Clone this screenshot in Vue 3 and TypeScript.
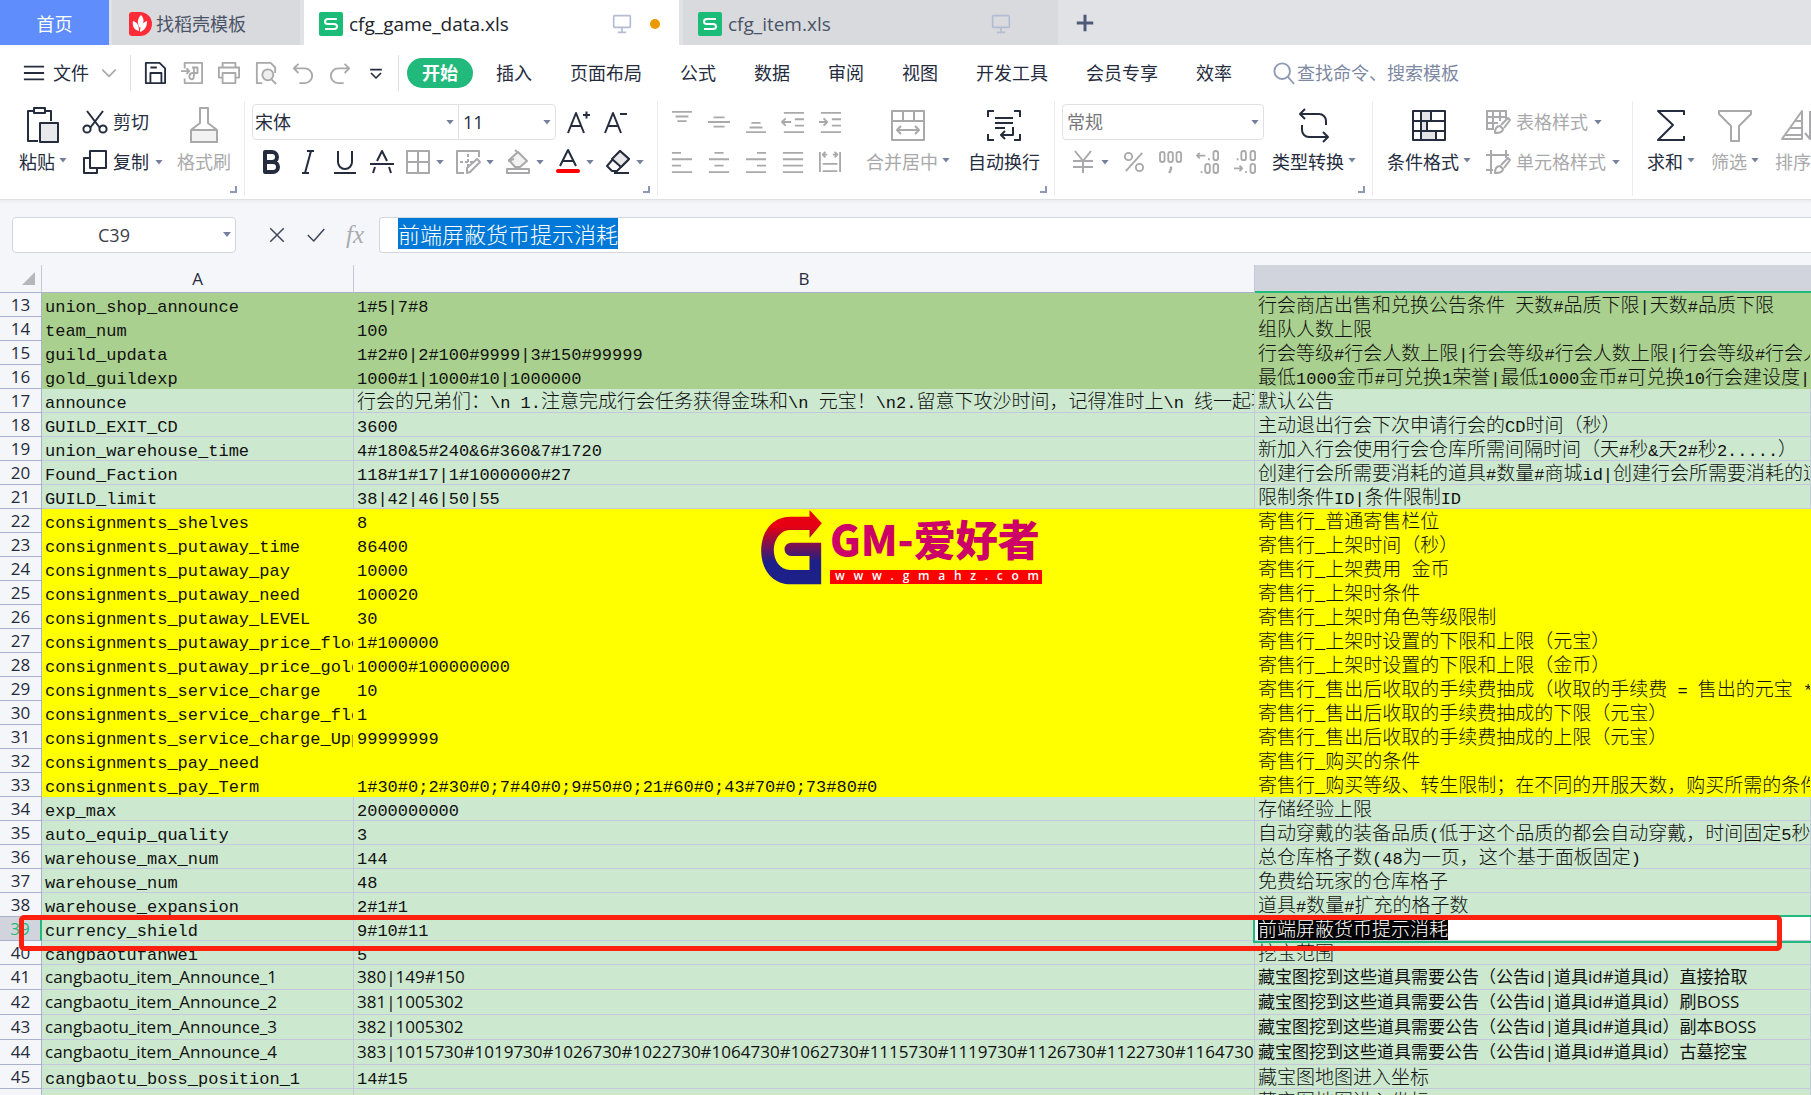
<script setup lang="ts">
import { ref, onMounted, h } from 'vue'
import type { FunctionalComponent } from 'vue'

interface Row {
  n: number
  a: string
  b: string
  c: string
  tone: 'olive' | 'mint' | 'yellow'
  sans?: boolean
}

interface Run {
  text: string
  wide: boolean
}

const glyphs: Record<string, string> = {
  menu: '<path d="M1 5h22M1 12h22M1 19h22"/>',
  chevron: '<path d="M4 8l8 8 8-8"/>',
  save: '<path d="M2 1h15l6 6v16H2zM7 23V12h12v11M7 6h7"/>',
  pdf: '<path d="M4 7V1h19v22H4v-5M0 10h9M6 7l3 3-3 3M12 6h6v6h-5c-5 0-5 7-1 7 3 0 2-8 2-13"/>',
  print: '<path d="M5 6V1h14v5M5 17H1V6h22v11h-4M5 12h14v11H5z"/>',
  preview: '<path d="M8 23H2V1h15l5 5v6"/><circle cx="14" cy="14" r="6" fill="#eee"/><path d="M18 19l5 5"/>',
  undo: '<path d="M7 2L2 7l5 5M2 7h12a8 8 0 0 1 0 16H8"/>',
  redo: '<path d="M17 2l5 5-5 5M22 7H10a8 8 0 0 0 0 16h6"/>',
  more: '<path d="M5 8h14M6 12l6 6 6-6"/>',
  cut: '<path d="M4 1l13 17M20 1L7 18"/><circle cx="4" cy="19" r="3.6"/><circle cx="20" cy="19" r="3.6"/>',
  copy: '<path d="M7 8H1v15h13v-5M7 1h16v17H7z"/>',
  grow: '<path d="M1 23L9 3l8 20M4 16h10M16 5h7M19.500 1.500v7"/>',
  shrink: '<path d="M1 23L9 3l8 20M4 16h10M16 4h7"/>',
  bold: '<path d="M6 2h7a5 5 0 0 1 0 10H6zM6 12h8a5 5 0 0 1 0 10H6z" stroke-width="4"/>',
  italic: '<path d="M11 1h7M6 23h7M15 1L9 23"/>',
  underline: '<path d="M5 1v11a7 7 0 0 0 14 0V1M1 23h22"/>',
  strike: '<path d="M0 14h24M7 11l5-10 5 10M5 17l-2 6M19 17l2 6"/>',
  borders: '<path d="M1 1h22v22H1zM12 1v22M1 12h22"/>',
  drawBorder: '<path d="M23 7V1H1v22h7"/><path d="M4 12h13M12 4v15" stroke-dasharray="3 2"/><path d="M11 23v-5L21 9l3 3-10 10z"/>',
  bucket: '<path d="M3 10L12 2l9 9-7 6H9z" fill="#f2f2f2"/><path d="M9 0l3 3M2 11l6-2M1 19h22v4H1z"/>',
  fontColor: '<path d="M4 16L12 0l8 16M7 11h10"/><path d="M2 21h20" stroke="#f00" stroke-width="4" stroke-linecap="round"/>',
  eraser: '<path d="M14 1l9 8-12 12H6l-5-5z"/><path d="M14 1l9 8-8 8-9-8z" fill="#e8e8ea"/><path d="M8 23h15"/>',
  vTop: '<path d="M1 1h22M5 6h14M7 11h10"/>',
  vMid: '<path d="M6 7h12M0 12h24M6 17h12"/>',
  vBot: '<path d="M7 13h10M5 18h14M1 23h22"/>',
  outdent: '<path d="M2 2h22M14 9h10M14 16h10M2 23h22M0 12h10M4 8l-4 4 4 4"/>',
  indent: '<path d="M2 2h22M14 9h10M14 16h10M2 23h22M0 12h9M5 8l4 4-4 4"/>',
  left: '<path d="M1 2h10M1 9h22M1 16h10M1 23h22"/>',
  center: '<path d="M7 2h10M1 9h22M7 16h10M1 23h22"/>',
  right: '<path d="M13 2h10M1 9h22M13 16h10M1 23h22"/>',
  justify: '<path d="M1 2h22M1 9h22M1 16h22M1 23h22"/>',
  spread: '<path d="M1 1v22M23 1v22M4 4h5M15 4h5M7 1L4 4l3 3M17 1l3 3-3 3M4 14h16M4 22h16"/>',
  currency: '<path d="M4 1l8 10 8-10M2 11h20M2 17h20M12 11v12"/>',
  percent: '<path d="M21 2L3 22"/><circle cx="6" cy="6" r="4"/><circle cx="18" cy="18" r="4"/>',
  thousands: '<rect x="0" y="1" width="5" height="11" rx="2.500"/><rect x="9" y="1" width="5" height="11" rx="2.500"/><rect x="18" y="1" width="5" height="11" rx="2.500"/><path d="M12 17v3l-2 4" stroke-width="2.500"/>',
  moreDec: '<path d="M0 5h9M3 2L0 5l3 3M13 8v2M5 22v2"/><rect x="18" y="0" width="5" height="10" rx="2.500"/><rect x="9" y="14" width="5" height="10" rx="2.500"/><rect x="18" y="14" width="5" height="10" rx="2.500"/>',
  lessDec: '<path d="M0 19h9M6 16l3 3-3 3M4 8v2M13 22v2"/><rect x="8" y="0" width="5" height="10" rx="2.500"/><rect x="18" y="0" width="5" height="10" rx="2.500"/><rect x="18" y="14" width="5" height="10" rx="2.500"/>',
  tableStyle: '<path d="M20 9V1H1v18h7M1 7h19M1 13h11M7 1v18M14 1v10M9 23c0-4 1-7 5-7l3 3c0 3-3 4-8 4zM15 15l7-7 2 2-6 8"/>',
  cellStyle: '<path d="M0 5h23M5 0v24M0 20h7M20 0v8M9 23c0-4 1-7 5-7l3 3c0 3-3 4-8 4zM15 15l7-7 2 2-6 8"/>',
  search: '<circle cx="10" cy="10" r="8.500"/><path d="M16 16l7 8"/>',
  monitor: '<rect x="2" y="2" width="20" height="14" rx="1"/><path d="M12 16v6M7 22h10"/>',
  plus: '<path d="M12 1v22M1 12h22"/>',
  close: '<path d="M3 3l18 18M21 3L3 21"/>',
  check: '<path d="M1 12l8 8L23 4"/>',
  paste: '<path d="M10 4H3v30h10M26 14V4h-7M9 1h11v5H9z"/><path d="M15 16h18v19H15z" fill="#e8e9ec"/>',
  painter: '<path d="M14 1h8v15l9 7v12H5V23l9-7z"/><path d="M5 23h26v12H5z" fill="#f2f2f2"/>',
  merge: '<path d="M2 4h32v29H2zM2 14h32M13 4v10M24 4v10M7 23h22M11 19l-4 4 4 4M25 19l4 4-4 4"/>',
  wrap: '<path d="M8 4H2v6M28 4h6v6M8 33H2v-6M28 33h6v-6M9 11h18M9 16h18M9 21h10M27 20v8H15M19 24l-4 4 4 4"/>',
  convert: '<path d="M9 2L4 7l5 5M4 7h19a7 7 0 0 1 7 7v4M6 18v5a7 7 0 0 0 7 7h19M27 25l5 5-5 5"/>',
  condition: '<path d="M10 4h10v10H10zM10 14h6v10h-6zM10 24h15v9H10z" fill="#e4e4e6"/><path d="M2 4h32v29H2zM2 14h32M2 24h32M10 4v29M20 4v10M16 14v10M25 24v9"/>',
  sum: '<path d="M31 8V4H5l15 14L5 33h26v-4"/>',
  filter: '<path d="M2 4h32v3L22 19v15h-8V19L2 7z"/>',
  sort: '<path d="M21 4v28H1zM14 14h7M9 21h12M4 28h17M29 4v28M24 26l5 6 5-6"/>',
}

const Icon: FunctionalComponent<{ name: string; size?: number; box?: number }> = (p) =>
  h('svg', {
    width: p.size ?? 24,
    height: p.size ?? 24,
    viewBox: `0 0 ${p.box ?? 24} ${p.box ?? 24}`,
    fill: 'none',
    stroke: 'currentColor',
    'stroke-width': 2,
    'stroke-linejoin': 'round',
    overflow: 'visible',
    'aria-hidden': 'true',
    innerHTML: glyphs[p.name],
  })
Icon.props = ['name', 'size', 'box']

const quick = ['save', 'pdf', 'print', 'preview', 'undo', 'redo']
const menus = ['插入', '页面布局', '公式', '数据', '审阅', '视图', '开发工具', '会员专享', '效率']
const plainText = ['bold', 'italic', 'underline', 'strike']
const comboText = [
  { icon: 'borders', dim: true },
  { icon: 'drawBorder', dim: true },
  { icon: 'bucket', dim: true },
  { icon: 'fontColor', dim: false },
  { icon: 'eraser', dim: false },
]
const alignTop = ['vTop', 'vMid', 'vBot', 'outdent', 'indent']
const alignBottom = ['left', 'center', 'right', 'justify', 'spread']
const numberTools = ['percent', 'thousands', 'moreDec', 'lessDec']

const rows: Row[] = [
  { n: 13, a: 'union_shop_announce', b: '1#5|7#8', c: '行会商店出售和兑换公告条件 天数#品质下限|天数#品质下限', tone: 'olive' },
  { n: 14, a: 'team_num', b: '100', c: '组队人数上限', tone: 'olive' },
  { n: 15, a: 'guild_updata', b: '1#2#0|2#100#9999|3#150#99999', c: '行会等级#行会人数上限|行会等级#行会人数上限|行会等级#行会人数上限', tone: 'olive' },
  { n: 16, a: 'gold_guildexp', b: '1000#1|1000#10|1000000', c: '最低1000金币#可兑换1荣誉|最低1000金币#可兑换10行会建设度|每日', tone: 'olive' },
  { n: 17, a: 'announce', b: '行会的兄弟们：\\n 1.注意完成行会任务获得金珠和\\n 元宝！\\n2.留意下攻沙时间，记得准时上\\n 线一起攻沙', c: '默认公告', tone: 'mint' },
  { n: 18, a: 'GUILD_EXIT_CD', b: '3600', c: '主动退出行会下次申请行会的CD时间（秒）', tone: 'mint' },
  { n: 19, a: 'union_warehouse_time', b: '4#180&5#240&6#360&7#1720', c: '新加入行会使用行会仓库所需间隔时间（天#秒&天2#秒2.....）', tone: 'mint' },
  { n: 20, a: 'Found_Faction', b: '118#1#17|1#1000000#27', c: '创建行会所需要消耗的道具#数量#商城id|创建行会所需要消耗的道具', tone: 'mint' },
  { n: 21, a: 'GUILD_limit', b: '38|42|46|50|55', c: '限制条件ID|条件限制ID', tone: 'mint' },
  { n: 22, a: 'consignments_shelves', b: '8', c: '寄售行_普通寄售栏位', tone: 'yellow' },
  { n: 23, a: 'consignments_putaway_time', b: '86400', c: '寄售行_上架时间（秒）', tone: 'yellow' },
  { n: 24, a: 'consignments_putaway_pay', b: '10000', c: '寄售行_上架费用 金币', tone: 'yellow' },
  { n: 25, a: 'consignments_putaway_need', b: '100020', c: '寄售行_上架时条件', tone: 'yellow' },
  { n: 26, a: 'consignments_putaway_LEVEL', b: '30', c: '寄售行_上架时角色等级限制', tone: 'yellow' },
  { n: 27, a: 'consignments_putaway_price_floor', b: '1#100000', c: '寄售行_上架时设置的下限和上限（元宝）', tone: 'yellow' },
  { n: 28, a: 'consignments_putaway_price_gold', b: '10000#100000000', c: '寄售行_上架时设置的下限和上限（金币）', tone: 'yellow' },
  { n: 29, a: 'consignments_service_charge', b: '10', c: '寄售行_售出后收取的手续费抽成（收取的手续费 = 售出的元宝 * 抽成）', tone: 'yellow' },
  { n: 30, a: 'consignments_service_charge_floor', b: '1', c: '寄售行_售出后收取的手续费抽成的下限（元宝）', tone: 'yellow' },
  { n: 31, a: 'consignments_service_charge_Upper', b: '99999999', c: '寄售行_售出后收取的手续费抽成的上限（元宝）', tone: 'yellow' },
  { n: 32, a: 'consignments_pay_need', b: '', c: '寄售行_购买的条件', tone: 'yellow' },
  { n: 33, a: 'consignments_pay_Term', b: '1#30#0;2#30#0;7#40#0;9#50#0;21#60#0;43#70#0;73#80#0', c: '寄售行_购买等级、转生限制；在不同的开服天数，购买所需的条件', tone: 'yellow' },
  { n: 34, a: 'exp_max', b: '2000000000', c: '存储经验上限', tone: 'mint' },
  { n: 35, a: 'auto_equip_quality', b: '3', c: '自动穿戴的装备品质(低于这个品质的都会自动穿戴，时间固定5秒)', tone: 'mint' },
  { n: 36, a: 'warehouse_max_num', b: '144', c: '总仓库格子数(48为一页，这个基于面板固定)', tone: 'mint' },
  { n: 37, a: 'warehouse_num', b: '48', c: '免费给玩家的仓库格子', tone: 'mint' },
  { n: 38, a: 'warehouse_expansion', b: '2#1#1', c: '道具#数量#扩充的格子数', tone: 'mint' },
  { n: 39, a: 'currency_shield', b: '9#10#11', c: '前端屏蔽货币提示消耗', tone: 'mint' },
  { n: 40, a: 'cangbaotufanwei', b: '5', c: '挖宝范围', tone: 'mint' },
  { n: 41, a: 'cangbaotu_item_Announce_1', b: '380|149#150', c: '藏宝图挖到这些道具需要公告（公告id|道具id#道具id）直接拾取', tone: 'mint', sans: true },
  { n: 42, a: 'cangbaotu_item_Announce_2', b: '381|1005302', c: '藏宝图挖到这些道具需要公告（公告id|道具id#道具id）刷BOSS', tone: 'mint', sans: true },
  { n: 43, a: 'cangbaotu_item_Announce_3', b: '382|1005302', c: '藏宝图挖到这些道具需要公告（公告id|道具id#道具id）副本BOSS', tone: 'mint', sans: true },
  { n: 44, a: 'cangbaotu_item_Announce_4', b: '383|1015730#1019730#1026730#1022730#1064730#1062730#1115730#1119730#1126730#1122730#1164730', c: '藏宝图挖到这些道具需要公告（公告id|道具id#道具id）古墓挖宝', tone: 'mint', sans: true },
  { n: 45, a: 'cangbaotu_boss_position_1', b: '14#15', c: '藏宝图地图进入坐标', tone: 'mint' },
  { n: 46, a: '', b: '', c: '藏宝图地图进入坐标', tone: 'mint' },
]

const activeRow = 39

/* Full-width and half-width characters are set in different faces. */
function runs(text: string): Run[] {
  return (text.match(/[\u3000-\u9fff\uff00-\uffef]+|[^\u3000-\u9fff\uff00-\uffef]+/g) ?? []).map((t) => ({
    text: t,
    wide: /[\u3000-\u9fff\uff00-\uffef]/.test(t),
  }))
}

const formula = ref('前端屏蔽货币提示消耗')
const cellName = ref('C39')
const query = ref('')
const formulaBox = ref<HTMLInputElement | null>(null)
const site = 'www.gmahz.com'.split('')

onMounted(() => {
  formulaBox.value?.focus()
  formulaBox.value?.select()
})
</script>

<template>
  <div class="app">
    <nav class="tabs" aria-label="文档">
      <button class="tab home">首页</button>
      <button class="tab store">
        <svg width="23" height="24" viewBox="0 0 23 24" aria-hidden="true">
          <path d="M3 0h8a12 12 0 0 1 0 24H3a3 3 0 0 1-3-3V3a3 3 0 0 1 3-3z" fill="#ff2b36" />
          <path d="M12 3c4 4 3 9-1 13-3-4-3-9 1-13zM4 9c4 1 6 4 6 10-5-1-7-5-6-10zM18 9c0 6-2 9-7 11 0-5 2-9 7-11z" fill="#fff" />
        </svg>
        <span>找稻壳模板</span>
      </button>
      <button class="tab file active">
        <svg width="24" height="24" viewBox="0 0 24 24" aria-hidden="true">
          <rect width="24" height="24" rx="2" fill="#1bbb78" />
          <path d="M18 7H9a3 2.500 0 0 0 0 5h6a3 2.500 0 0 1 0 5H6" fill="none" stroke="#fff" stroke-width="2" />
        </svg>
        <span class="file-name">cfg_game_data.xls</span>
        <Icon class="screen" name="monitor" :size="20" />
        <i class="dirty"></i>
      </button>
      <button class="tab file">
        <svg width="24" height="24" viewBox="0 0 24 24" aria-hidden="true">
          <rect width="24" height="24" rx="2" fill="#1bbb78" />
          <path d="M18 7H9a3 2.500 0 0 0 0 5h6a3 2.500 0 0 1 0 5H6" fill="none" stroke="#fff" stroke-width="2" />
        </svg>
        <span class="file-name">cfg_item.xls</span>
        <Icon class="screen" name="monitor" :size="20" />
        <i class="dirty none"></i>
      </button>
      <button class="add" aria-label="新建"><Icon name="plus" :size="18" stroke-width="4" /></button>
    </nav>

    <div class="menubar">
      <button class="file-menu">
        <Icon name="menu" :size="22" />
        <span>文件</span>
        <Icon class="dim" name="chevron" :size="20" />
      </button>
      <div class="quick">
        <button v-for="q in quick" :key="q" :class="{ dim: q !== 'save' }" :aria-label="q"><Icon :name="q" :size="22" /></button>
        <button aria-label="more"><Icon name="more" :size="20" /></button>
      </div>
      <button class="pill">开始</button>
      <div class="menus">
        <button v-for="m in menus" :key="m">{{ m }}</button>
      </div>
      <label class="search">
        <Icon name="search" :size="22" />
        <input v-model="query" type="text" placeholder="查找命令、搜索模板" aria-label="查找命令、搜索模板" />
      </label>
    </div>

    <div class="ribbon">
      <section class="group clip">
        <button class="big"><Icon name="paste" :size="36" :box="36" /><span>粘贴<i class="caret"></i></span></button>
        <div class="stack">
          <button class="wide"><Icon name="cut" /><span>剪切</span></button>
          <button class="wide"><Icon name="copy" /><span>复制</span><i class="caret"></i></button>
        </div>
        <button class="big dim"><Icon name="painter" :size="36" :box="36" /><span>格式刷</span></button>
        <i class="corner"></i>
      </section>

      <section class="group font">
        <div class="stack">
          <div class="line">
            <div class="pair">
              <label class="pick face"><select aria-label="字体"><option>宋体</option></select><i class="caret"></i></label>
              <label class="pick size"><select aria-label="字号"><option>11</option></select><i class="caret"></i></label>
            </div>
            <button class="tool" aria-label="grow"><Icon name="grow" /></button>
            <button class="tool" aria-label="shrink"><Icon name="shrink" /></button>
          </div>
          <div class="line">
            <button v-for="t in plainText" :key="t" class="tool" :aria-label="t"><Icon :name="t" /></button>
            <button v-for="t in comboText" :key="t.icon" class="combo" :class="{ dim: t.dim }" :aria-label="t.icon"><Icon :name="t.icon" /><i class="caret"></i></button>
          </div>
        </div>
        <i class="corner"></i>
      </section>

      <section class="group align">
        <div class="stack dim">
          <div class="line"><button v-for="t in alignTop" :key="t" class="tool" :aria-label="t"><Icon :name="t" :size="22" /></button></div>
          <div class="line"><button v-for="t in alignBottom" :key="t" class="tool" :aria-label="t"><Icon :name="t" :size="22" /></button></div>
        </div>
        <button class="big dim"><Icon name="merge" :size="36" :box="36" /><span>合并居中<i class="caret"></i></span></button>
        <button class="big"><Icon name="wrap" :size="36" :box="36" /><span>自动换行</span></button>
        <i class="corner"></i>
      </section>

      <section class="group number">
        <div class="stack">
          <div class="line">
            <label class="pick format"><select class="muted" aria-label="数字格式"><option>常规</option></select><i class="caret"></i></label>
          </div>
          <div class="line dim money">
            <button class="combo" aria-label="currency"><Icon name="currency" /><i class="caret"></i></button>
            <button v-for="t in numberTools" :key="t" class="tool" :aria-label="t"><Icon :name="t" :size="22" /></button>
          </div>
        </div>
        <button class="big"><Icon name="convert" :size="36" :box="36" /><span>类型转换<i class="caret"></i></span></button>
        <i class="corner"></i>
      </section>

      <section class="group styles">
        <button class="big"><Icon name="condition" :size="36" :box="36" /><span>条件格式<i class="caret"></i></span></button>
        <div class="stack dim">
          <button class="wide"><Icon name="tableStyle" /><span>表格样式</span><i class="caret"></i></button>
          <button class="wide"><Icon name="cellStyle" /><span>单元格样式</span><i class="caret"></i></button>
        </div>
      </section>

      <section class="group edit">
        <button class="big"><Icon name="sum" :size="36" :box="36" /><span>求和<i class="caret"></i></span></button>
        <button class="big dim"><Icon name="filter" :size="36" :box="36" /><span>筛选<i class="caret"></i></span></button>
        <button class="big dim"><Icon name="sort" :size="36" :box="36" /><span>排序<i class="caret"></i></span></button>
      </section>
    </div>

    <div class="formula">
      <label class="name-box"><input v-model="cellName" type="text" aria-label="名称框" /><i class="caret"></i></label>
      <div class="formula-tools">
        <button aria-label="取消"><Icon name="close" :size="18" /></button>
        <button aria-label="确认"><Icon name="check" :size="18" /></button>
        <button class="fx" aria-label="插入函数">fx</button>
      </div>
      <input ref="formulaBox" v-model="formula" class="formula-input" type="text" aria-label="编辑栏" />
    </div>

    <main class="sheet">
      <table>
        <colgroup><col class="c0" /><col class="c1" /><col class="c2" /><col /></colgroup>
        <thead>
          <tr><th class="all"><i></i></th><th>A</th><th>B</th><th class="on"></th></tr>
        </thead>
        <tbody>
          <tr v-for="r in rows" :key="r.n" :class="[r.tone, { sans: r.sans, current: r.n === activeRow }]">
            <th scope="row">{{ r.n }}</th>
            <td><span v-for="(s, i) in runs(r.a)" :key="i" :class="{ cjk: s.wide }">{{ s.text }}</span></td>
            <td><span v-for="(s, i) in runs(r.b)" :key="i" :class="{ cjk: s.wide }">{{ s.text }}</span></td>
            <td><span v-for="(s, i) in runs(r.c)" :key="i" :class="{ cjk: s.wide }">{{ s.text }}</span></td>
          </tr>
        </tbody>
      </table>
      <div class="callout"></div>
      <div class="stamp">
        <svg width="61" height="75" viewBox="0 0 182 225" aria-hidden="true">
          <defs>
            <linearGradient id="g" x1="0" y1="0" x2="0" y2="1">
              <stop offset="0.220" stop-color="#e60012" />
              <stop offset="0.700" stop-color="#1d2088" />
            </linearGradient>
          </defs>
          <path fill="url(#g)" d="M145 20H88C30 20 0 70 0 122s30 101 90 101h90V98H90a20 20 0 0 0 0 40h55v42H88c-33 0-50-30-50-59s17-61 50-61h57v24l37-44L145 0z" />
        </svg>
        <div class="stamp-text">
          <strong>GM-爱好者</strong>
          <div class="site"><span v-for="(ch, i) in site" :key="i">{{ ch }}</span></div>
        </div>
      </div>
    </main>
  </div>
</template>

<style>
body {
  overflow: hidden;
}
</style>

<style scoped>
.app {
  height: 100vh;
  overflow: hidden;
  background: #f5f6f9;
  color: #252c3e;
  font: 18px/24px "Open Sans", "Noto Sans CJK SC", sans-serif;
  font-weight: 400;
}
.app *,
.app *::before {
  box-sizing: border-box;
}
button,
input,
select {
  margin: 0;
  padding: 0;
  border: 0;
  background: none;
  color: inherit;
  font: inherit;
  white-space: nowrap;
  outline: none;
}
button {
  display: flex;
  align-items: center;
  flex: none;
}
svg {
  flex: none;
  display: block;
}
.dim {
  color: #a9a9ab;
}

/* document tabs */
.tabs {
  display: flex;
  height: 45px;
  background: #e1e2e6;
}
.tab {
  height: 45px;
  margin-right: 4px;
  padding-top: 2px;
  background: #d9dadd;
  color: #4a5468;
}
.home {
  width: 109px;
  margin-right: 3px;
  justify-content: center;
  background: #608dfc;
  color: #fff;
}
.store {
  width: 188px;
  padding-left: 17px;
  gap: 4px;
}
.file {
  width: 375px;
  padding: 2px 19px 0 15px;
}
.file-name {
  flex: 1;
  margin-left: 6px;
  text-align: left;
  font-size: 19px;
}
.active {
  background: #fff;
  color: #20242c;
}
.screen {
  color: #b4bcd4;
}
.dirty {
  width: 10px;
  height: 10px;
  margin-left: 18px;
  border-radius: 50%;
  background: #ea9a00;
}
.dirty.none {
  background: none;
}
.add {
  margin-left: 14px;
  color: #4c5a78;
}

/* menu bar */
.menubar {
  display: flex;
  align-items: center;
  height: 56px;
  padding-left: 23px;
  background: #fff;
}
.file-menu {
  gap: 8px;
  height: 36px;
  padding-right: 11px;
  border-right: 1px solid #dcdde0;
}
.file-menu .dim {
  margin-left: 2px;
}
.quick {
  display: flex;
  align-items: center;
  gap: 15px;
  height: 36px;
  padding: 0 12px 0 13px;
  border-right: 1px solid #dcdde0;
}
.pill {
  height: 30px;
  margin-left: 8px;
  padding: 0 15px;
  border-radius: 15px;
  background: #22ba7c;
  color: #fff;
  font-weight: 700;
}
.menus {
  display: flex;
  gap: 38px;
  margin-left: 23px;
}
.search {
  display: flex;
  align-items: center;
  gap: 2px;
  flex: 1;
  margin-left: 41px;
  color: #8c99b5;
}
.search input {
  flex: 1;
}
.search input::placeholder {
  color: #7d88a3;
  opacity: 1;
}

/* ribbon */
.ribbon {
  display: flex;
  height: 99px;
  padding-bottom: 3px;
  border-bottom: 1px solid #dedfe2;
  background: #fff;
  overflow: hidden;
}
.group {
  position: relative;
  display: flex;
  flex: none;
  height: 95px;
  border-right: 1px solid #ececee;
}
.big {
  flex-direction: column;
  gap: 7px;
  height: 74px;
  margin-top: 6px;
}
.big span {
  display: flex;
  align-items: center;
}
.caret {
  flex: none;
  width: 8px;
  height: 5px;
  background: #75819c;
  clip-path: polygon(0 0, 100% 0, 50% 100%);
}
.big .caret {
  margin: 0 0 4px 4px;
}
.stack {
  display: flex;
  flex-direction: column;
  gap: 4px;
  padding-top: 3px;
}
.line,
.wide {
  display: flex;
  align-items: center;
  height: 36px;
}
.wide {
  gap: 6px;
}
.tool {
  width: 37px;
  height: 36px;
  justify-content: center;
}
.combo {
  width: 50px;
  height: 36px;
  padding-left: 6px;
  gap: 6px;
}
.corner {
  position: absolute;
  right: 7px;
  bottom: 3px;
  width: 7px;
  height: 7px;
  border: solid #8d98b4;
  border-width: 0 2px 2px 0;
}
.clip {
  padding: 0 13px 0 19px;
  gap: 16px;
}
.clip .stack {
  width: 78px;
}
.font {
  padding: 0 7px;
}
.pair {
  display: flex;
  margin-right: 4px;
}
.pick {
  display: flex;
  align-items: center;
  height: 36px;
  padding: 0 4px;
  border: 1px solid #dfe0e3;
  border-radius: 4px;
  background: #fff;
}
.pick select {
  flex: 1;
  min-width: 0;
  appearance: none;
}
.face {
  width: 207px;
  padding-left: 2px;
  border-radius: 4px 0 0 4px;
}
.size {
  width: 98px;
  margin-left: -1px;
  border-radius: 0 4px 4px 0;
}
.format {
  width: 202px;
}
.muted {
  color: #76777b;
}
.align {
  padding: 0 14px 0 5px;
}
.align .big {
  margin-left: 18px;
}
.number {
  padding: 0 16px 0 7px;
  gap: 8px;
}
.money {
  padding-left: 3px;
}
.styles {
  padding: 0 12px 0 14px;
  gap: 15px;
}
.edit {
  padding-left: 14px;
  gap: 16px;
}

/* formula bar */
.formula {
  display: flex;
  align-items: center;
  height: 65px;
  padding: 4px 0 0 12px;
  background: linear-gradient(#ebecef, #f5f6f9 4px);
}
.name-box {
  display: flex;
  align-items: center;
  width: 224px;
  height: 36px;
  padding-right: 4px;
  border: 1px solid #d4d6df;
  border-radius: 4px;
  background: #fff;
}
.name-box input {
  flex: 1;
  min-width: 0;
  padding-right: 8px;
  text-align: center;
  color: #3c414d;
}
.formula-tools {
  display: flex;
  align-items: center;
  gap: 21px;
  width: 143px;
  padding-left: 32px;
  color: #3f4860;
}
.fx {
  color: #aaabae;
  font: italic 25px/28px "Liberation Serif", serif;
}
.formula-input {
  flex: 1;
  height: 36px;
  padding: 0 18px 4px;
  border: solid #d4d6df;
  border-width: 1px 0 1px 1px;
  border-radius: 4px 0 0 4px;
  background: #fff;
  font-size: 22px;
  line-height: 25px;
  font-weight: 300;
}
.formula-input::selection {
  background: #0078d7;
  color: #fff;
}

/* sheet */
.sheet {
  position: relative;
}
table {
  width: 100%;
  table-layout: fixed;
  border-collapse: separate;
  border-spacing: 0;
}
.c0 {
  width: 42px;
}
.c1 {
  width: 312px;
}
.c2 {
  width: 901px;
}
thead th {
  height: 28px;
  padding: 0;
  border-right: 1px solid #c3c8d8;
  border-bottom: 1px solid #a9b2ca;
  font-weight: 400;
  font-size: 17px;
  line-height: 24px;
}
thead th.on {
  border-right: 0;
  border-bottom: 2px solid #22ba7c;
  background: #d1d4dc;
}
.all i {
  display: block;
  width: 13px;
  height: 13px;
  margin-left: 22px;
  background: #b7b7b9;
  clip-path: polygon(100% 0, 100% 100%, 0 100%);
}
tbody th {
  height: 24px;
  padding: 0;
  border-right: 1px solid #a9b2ca;
  border-bottom: 1px solid #a9b2ca;
  font-weight: 400;
  font-size: 17px;
  line-height: 23px;
  vertical-align: top;
}
td {
  height: 24px;
  padding: 7px 0 0 3px;
  border-right: 1px solid #c5c8dd;
  border-bottom: 1px solid #c5c8dd;
  overflow: hidden;
  white-space: pre;
  vertical-align: top;
  color: #111;
  font: 17px/16px "Liberation Mono", monospace;
}
.cjk {
  font: 300 19px/1px "Noto Sans CJK SC", sans-serif;
}
.mint td {
  background: #cce8cf;
}
.olive td {
  background: #a9d08e;
  border-color: #a9d08e;
}
.yellow td {
  background: #ff0;
  border-color: #ff0;
}
.sans th,
.sans td {
  height: 25px;
}
.sans td {
  padding-top: 0;
  font: 17px/24px "Open Sans", "Noto Sans CJK SC", sans-serif;
}
.sans .cjk {
  font: 400 17px/1px "Noto Sans CJK SC", sans-serif;
}
.current th {
  border-right: 2px solid #22ba7c;
  background: #d1d4dc;
  color: #22ba7c;
}
.current td:last-child {
  outline: 2px solid #22ba7c;
  background: #fff;
}
.current td:last-child .cjk {
  background: #000;
  color: #fff;
}
.callout {
  position: absolute;
  top: 650px;
  left: 19px;
  right: 29px;
  height: 36px;
  border: 5px solid #ff2010;
  border-radius: 5px;
}
.stamp {
  position: absolute;
  top: 245px;
  left: 761px;
  display: flex;
  gap: 8px;
}
.stamp-text {
  width: 212px;
}
.stamp strong {
  display: block;
  height: 60px;
  color: #cc0066;
  font: 900 42px/56px "Noto Sans CJK SC", sans-serif;
  white-space: nowrap;
}
.site {
  display: flex;
  justify-content: space-between;
  height: 14px;
  padding: 0 3px 0 5px;
  background: #f00;
  color: #fff;
  font: 600 12px/12px "Open Sans", sans-serif;
}
</style>
